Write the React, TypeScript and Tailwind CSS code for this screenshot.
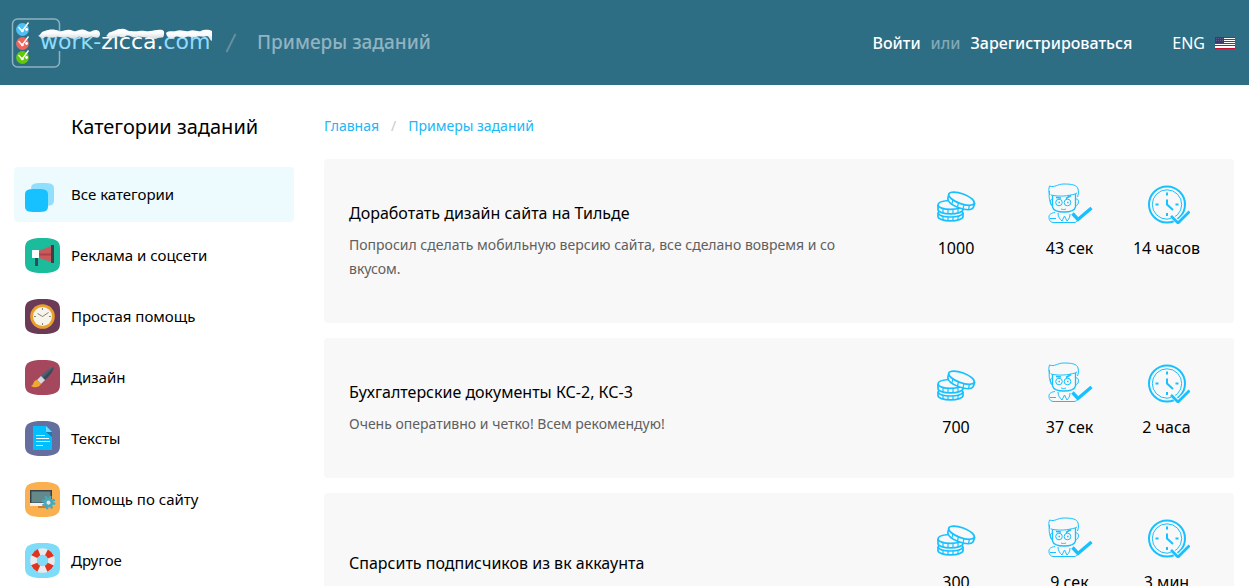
import type { ReactNode } from "react";

type Task = {
  title: string;
  review?: string;
  price: string;
  found: string;
  done: string;
};

const tasks: Task[] = [
  {
    title: "Доработать дизайн сайта на Тильде",
    review: "Попросил сделать мобильную версию сайта, все сделано вовремя и со вкусом.",
    price: "1000",
    found: "43 сек",
    done: "14 часов",
  },
  {
    title: "Бухгалтерские документы КС-2, КС-3",
    review: "Очень оперативно и четко! Всем рекомендую!",
    price: "700",
    found: "37 сек",
    done: "2 часа",
  },
  {
    title: "Спарсить подписчиков из вк аккаунта",
    price: "300",
    found: "9 сек",
    done: "3 мин",
  },
];

function Logo() {
  return (
    <svg width="202" height="52" viewBox="0 0 202 52" role="img" aria-label="work-zicca.com">
      <defs>
        <linearGradient id="snow" x1="0" y1="0" x2="0" y2="1">
          <stop offset="0.4" stopColor="#fbfcfd" />
          <stop offset="1" stopColor="#d3dbe0" />
        </linearGradient>
      </defs>
      <path
        d="M48.5 14V7a5 5 0 0 0-5-5h-37a5 5 0 0 0-5 5v38a5 5 0 0 0 5 5h37a5 5 0 0 0 5-5V34"
        fill="none"
        stroke="#8fb2bf"
        strokeWidth="1.5"
      />
      {[
        { y: 12.5, c: "#4fc0f5" },
        { y: 26.5, c: "#f2655d" },
        { y: 40.5, c: "#62c808" },
      ].map((b) => (
        <g key={b.c}>
          <circle cx="11.5" cy={b.y} r="6.4" fill={b.c} />
          <path d={`M7.5 ${b.y - 2.5}l3.6 4.2L17.5 ${b.y - 7}`} fill="none" stroke="#fff" strokeWidth="1.3" />
          <circle cx="15.6" cy={b.y} r="1.4" fill="#fff" />
          <circle cx="11.3" cy={b.y + 1.3} r="1.5" fill="#fff" />
        </g>
      ))}
      <text x="29" y="32" fontFamily="'DejaVu Sans', sans-serif" fontSize="22" fill="#8edcff">
        work-<tspan fill="#fff">zicca.</tspan>com
      </text>
      <g fill="url(#snow)">
        <path d="M27 19C30 18 30 14 34 14C38 12 44 12 48 14C51 15 52 13 56 13C61 12 62 15 65 14C69 12 73 12 76 14C80 16 81 13 85 13C89 13 90 17 88 20C85 22 83 19 79 20C73 23 71 19 67 20C62 24 59 20 56 20C51 22 49 19 45 20C39 22 38 19 34 20C30 24 31 20 27 19z" />
        <path d="M95 19C97 18 97 15 100 15C104 14 105 12 110 12C115 11 117 15 120 14C127 15 129 13 134 14C140 15 141 13 146 13C151 12 154 13 153 17C153 22 150 20 147 21C142 24 140 20 137 20C132 21 130 19 126 20C121 22 119 17 115 19C111 22 108 18 105 20C101 23 98 20 95 19z" />
        <path d="M155 16C158 13 162 15 165 14C170 12 174 15 178 14C183 12 186 15 190 14C194 12 199 13 201 14V24C198 23 199 20 196 19C191 21 189 18 185 20C181 22 179 18 175 20C171 23 168 18 164 20C161 23 156 22 155 16z" />
      </g>
    </svg>
  );
}

function UsFlag() {
  return (
    <svg width="20" height="12" viewBox="0 0 20 12" aria-hidden="true">
      <path fill="#fff" d="M0 0h20v12H0z" />
      <path stroke="#c8102e" d="M0 .5h20M0 2.5h20M0 4.5h20M0 6.5h20M0 8.5h20M0 11.5h20" />
      <path fill="#3c3b6e" d="M0 0h9v6H0z" />
      <path stroke="#5d5c8a" strokeDasharray="1 1" d="M1 1.5h7M1 3.5h7" />
    </svg>
  );
}

function Tile({ color, children }: { color: string; children: ReactNode }) {
  return (
    <svg className="shrink-0" width="35" height="35" viewBox="0 0 35 35" aria-hidden="true">
      <path
        fill={color}
        d="M17.500 0C30 0 35 2.500 35 10V25C35 32.500 30 35 17.500 35S0 32.500 0 25V10C0 2.500 5 0 17.500 0z"
      />
      {children}
    </svg>
  );
}

function AllIcon() {
  return (
    <svg className="shrink-0" width="35" height="35" viewBox="0 0 35 35" aria-hidden="true">
      <path fill="#8fe0ff" d="M17.500 6C27 6 29 7 29 12V23C29 28 27 29 17.500 29S6 28 6 23V12C6 7 8 6 17.500 6z" />
      <path fill="#17c0ff" d="M11.500 12C21 12 23 13 23 18V29C23 34 21 35 11.500 35S0 34 0 29V18C0 13 2 12 11.500 12z" />
    </svg>
  );
}

function MegaphoneIcon() {
  return (
    <Tile color="#1abc9c">
      <path fill="#324a5e" d="M10 19h3v9h-3z" />
      <path fill="#c9595b" d="M14 13l12-5v16l-12-4z" />
      <path fill="#a84448" d="M14 15.500h12v2H14z" />
      <path fill="#fff" d="M7 12h7v8H7z" />
      <path fill="#3a3f4b" d="M26 7h3v18h-3z" />
    </Tile>
  );
}

function ClockTileIcon() {
  return (
    <Tile color="#6b3a56">
      <circle cx="17.500" cy="17.500" r="12.300" fill="#e9a02c" />
      <circle cx="17.500" cy="17.500" r="9.500" fill="#f7f4ea" />
      <path d="M17.500 9v2M17.500 24v2M9 17.500h2M24 17.500h2M12.500 14.500l5 3 6-4" fill="none" stroke="#666" strokeWidth=".8" />
    </Tile>
  );
}

function BrushIcon() {
  return (
    <Tile color="#a5485e">
      <path fill="#4b6173" d="M29 7c-5 1-9 5-13 9l4 4c4-4 8-8 9-13z" />
      <path fill="#38495a" d="M29 7L18 18l2 2c4-4 8-8 9-13z" />
      <path fill="#d5dade" d="M16 16l4 4-4 4-4-4z" />
      <path fill="#f2a72e" d="M12 20c-4 0-3 5-6 6 3 2 8 2 10-2z" />
    </Tile>
  );
}

function DocIcon() {
  return (
    <Tile color="#656f9f">
      <path fill="#00bfff" d="M8 5h13l6 6v18H8z" />
      <path fill="#2576a8" d="M21 11h6v5z" />
      <path fill="#6fd9ff" d="M21 5l6 6h-6z" />
      <path stroke="#fff" d="M11 14.500h9M11 17.500h13M11 20.500h14M11 24.500h7" />
    </Tile>
  );
}

function MonitorIcon() {
  return (
    <Tile color="#fbb04f">
      <path fill="#c57d3a" d="M13 24h10v2H13z" />
      <path fill="#38424c" d="M5 8h22v14H5z" />
      <path fill="#64898b" d="M6.500 9.500h19v11h-19z" />
      <path fill="#eef1f2" d="M5 21h22v3H5z" />
      <circle cx="23.500" cy="20.500" r="3.500" fill="none" stroke="#4aa8bd" strokeWidth="3" />
      <circle cx="23.500" cy="20.500" r="5.700" fill="none" stroke="#4aa8bd" strokeWidth="2.400" strokeDasharray="2.240 2.240" />
      <circle cx="23.500" cy="20.500" r="2" fill="#dfe9ea" />
    </Tile>
  );
}

function LifebuoyIcon() {
  return (
    <Tile color="#7fdcf8">
      <circle cx="17.500" cy="17.500" r="9" fill="none" stroke="#e8eaee" strokeWidth="6.600" />
      <circle
        cx="17.500"
        cy="17.500"
        r="9"
        fill="none"
        stroke="#e0341f"
        strokeWidth="6.600"
        strokeDasharray="6.600 7.537"
        strokeDashoffset="-3.770"
      />
    </Tile>
  );
}

function CoinsIcon() {
  return (
    <svg width="46" height="42" viewBox="0 0 46 42" fill="none" stroke="#17c0ff" strokeWidth="1.700" aria-hidden="true">
      <path d="M15.500 18.500C9 19 5 20.500 5 23c0 2.500 5.500 4.300 12.500 4.300 6.500 0 11.500-1.700 12.300-3.800" />
      <path d="M5 23v4.500c0 2.500 5.500 4.300 12.500 4.300S30 30 30 27.500V24M6 29.500c-.7.600-1 1.200-1 2v3c0 2.500 5.500 4.300 12.500 4.300S30 37 30 34.500v-3c0-.8-.3-1.400-1-2" />
      <path d="M5 31c1 2.500 6 4 12.500 4S29 33.500 30 31" />
      <path d="M10 26.500V31M15 27.300v4.400M20 27.300v4.400M25 26v4.500M10 34v4M15 35v3.700M20 35v3.700M25 34v4" strokeWidth="1.200" />
      <path
        d="M15.800 12.500l-1 4c0 3.500 5 7 11 9.200 6.500 2.300 12.500 2.600 14.400.1l1.400-4.300L29 13z"
        fill="#f8f8f8"
      />
      <ellipse cx="28.500" cy="16.700" rx="13.500" ry="5" transform="rotate(20 28.500 16.700)" fill="#f8f8f8" />
      <path d="M20 17.500l-1 4M25.500 20.500l-1 4.500M31 22.300l-1 4.500M36.500 23l-1 4.300" strokeWidth="1.200" />
    </svg>
  );
}

function PersonIcon() {
  return (
    <svg width="46" height="42" viewBox="0 0 46 42" fill="none" stroke="#17c0ff" aria-hidden="true">
      <path d="M3 13C1 9 2 6 2.500 4 8 6 10 2 17 2c8 0 13 1 14 5 .8 3 .5 5-.5 8" />
      <path d="M2.500 9c-1 6 0 11 3 15M4 13c8 2 17 1 24-1l2-1" />
      <path d="M5.500 13.500V25c1 4 5 5 11.500 5s10.500-1 11.500-5V12" strokeWidth="1.300" />
      <path d="M28.500 17c4-1 4 6 0 7M5.500 17c-3 0-3 6 0 7" />
      <circle cx="12" cy="20.500" r="3.300" />
      <circle cx="20.500" cy="20.500" r="3.300" />
      <path d="M11.500 20.500h1.500M20 20.500h1.500M9 15.500l5 .5M19 16.500l5-3" strokeWidth="1.600" />
      <path d="M14 27c2 .7 3 .7 5 0M8 30.500c-4 .5-6 2-6 4.500 0 4 2 5.500 5 5.500h20c2 0 3-1 3-2" />
      <path d="M11 31c0 4 2 6 4 8l2.500-5 2.500 5c2-2 3-4 3-7M3 36.500h6" />
      <path d="M25.500 31.500l5.500 6L44.500 26" strokeWidth="3.400" />
    </svg>
  );
}

function TimeIcon() {
  return (
    <svg width="46" height="42" viewBox="0 0 46 42" fill="none" stroke="#17c0ff" aria-hidden="true">
      <circle cx="23" cy="22.500" r="18" strokeWidth="2" />
      <circle cx="23" cy="22.500" r="14.700" strokeWidth="1" />
      <path d="M23 10.500v3M23 31v3M11.500 22.500h3M31.500 22.500h3M23 17.500v5l6 5.500" strokeWidth="2" />
      <path d="M27 33.500l7 7L45.500 29" stroke="#f8f8f8" strokeWidth="4.500" />
      <path d="M27 34l7 7L45.500 29.500" strokeWidth="2.800" />
    </svg>
  );
}

const categories = [
  { name: "Все категории", icon: <AllIcon />, active: true },
  { name: "Реклама и соцсети", icon: <MegaphoneIcon /> },
  { name: "Простая помощь", icon: <ClockTileIcon /> },
  { name: "Дизайн", icon: <BrushIcon /> },
  { name: "Тексты", icon: <DocIcon /> },
  { name: "Помощь по сайту", icon: <MonitorIcon /> },
  { name: "Другое", icon: <LifebuoyIcon /> },
];

function Stat({ icon, value }: { icon: ReactNode; value: string }) {
  return (
    <div className="flex flex-col items-center gap-3 text-base leading-6">
      {icon}
      <span>{value}</span>
    </div>
  );
}

function TaskCard({ task }: { task: Task }) {
  return (
    <article className="flex min-h-[140px] items-center rounded-sm bg-[#f8f8f8] pr-[19px] pl-[25px]">
      <div className="min-w-0 flex-1 py-[42px] pr-6">
        <h2 className="text-base leading-6">{task.title}</h2>
        {task.review && <p className="mt-2 text-sm leading-6 text-[#5f5f5f]">{task.review}</p>}
      </div>
      <div className="grid shrink-0 grid-cols-[130px_97px_97px] self-start pt-[23px]">
        <Stat icon={<CoinsIcon />} value={task.price} />
        <Stat icon={<PersonIcon />} value={task.found} />
        <Stat icon={<TimeIcon />} value={task.done} />
      </div>
    </article>
  );
}

export default function App() {
  return (
    <div className="bg-white font-['Noto_Sans',sans-serif] text-black">
      <header className="flex h-[85px] items-center justify-between bg-[#2e6e85] pr-3.5 pl-[11px]">
        <div className="flex items-center">
          <a href="#">
            <Logo />
          </a>
          <svg className="mx-3" width="12" height="20" viewBox="0 0 12 20" aria-hidden="true">
            <path d="M1.500 19l9-18" stroke="#648f9f" strokeWidth="2" />
          </svg>
          <h1 className="ml-2 text-[19px] font-medium text-[#92b3c0]">Примеры заданий</h1>
        </div>
        <nav className="flex items-center text-base font-medium text-white">
          <a href="#">Войти</a>
          <span className="mx-2.5 text-[#83a9b6]">или</span>
          <a href="#">Зарегистрироваться</a>
          <a href="#" className="ml-10 flex items-center gap-2.5 font-normal">
            ENG
            <UsFlag />
          </a>
        </nav>
      </header>

      <div className="flex items-start gap-[30px] pr-[15px] pl-3.5">
        <aside className="w-[280px] shrink-0 pt-[27px]">
          <h2 className="pl-[57px] text-xl leading-[30px]">Категории заданий</h2>
          <ul className="mt-[25px] flex flex-col gap-1.5">
            {categories.map((c) => (
              <li key={c.name}>
                <a
                  href="#"
                  className={
                    c.active
                      ? "flex h-[55px] items-center gap-[11px] rounded-sm bg-[#edfbff] pl-[11px] text-[15px]"
                      : "flex h-[55px] items-center gap-[11px] rounded-sm pl-[11px] text-[15px]"
                  }
                >
                  {c.icon}
                  {c.name}
                </a>
              </li>
            ))}
          </ul>
        </aside>

        <main className="min-w-0 flex-1 pt-[29px]">
          <nav className="flex items-center gap-3 text-sm leading-6 text-[#20b7f5]">
            <a href="#">Главная</a>
            <span className="text-[#c9c9c9]">/</span>
            <a href="#">Примеры заданий</a>
          </nav>
          <div className="mt-[21px] flex flex-col gap-[15px]">
            {tasks.map((t) => (
              <TaskCard key={t.title} task={t} />
            ))}
          </div>
        </main>
      </div>
    </div>
  );
}
